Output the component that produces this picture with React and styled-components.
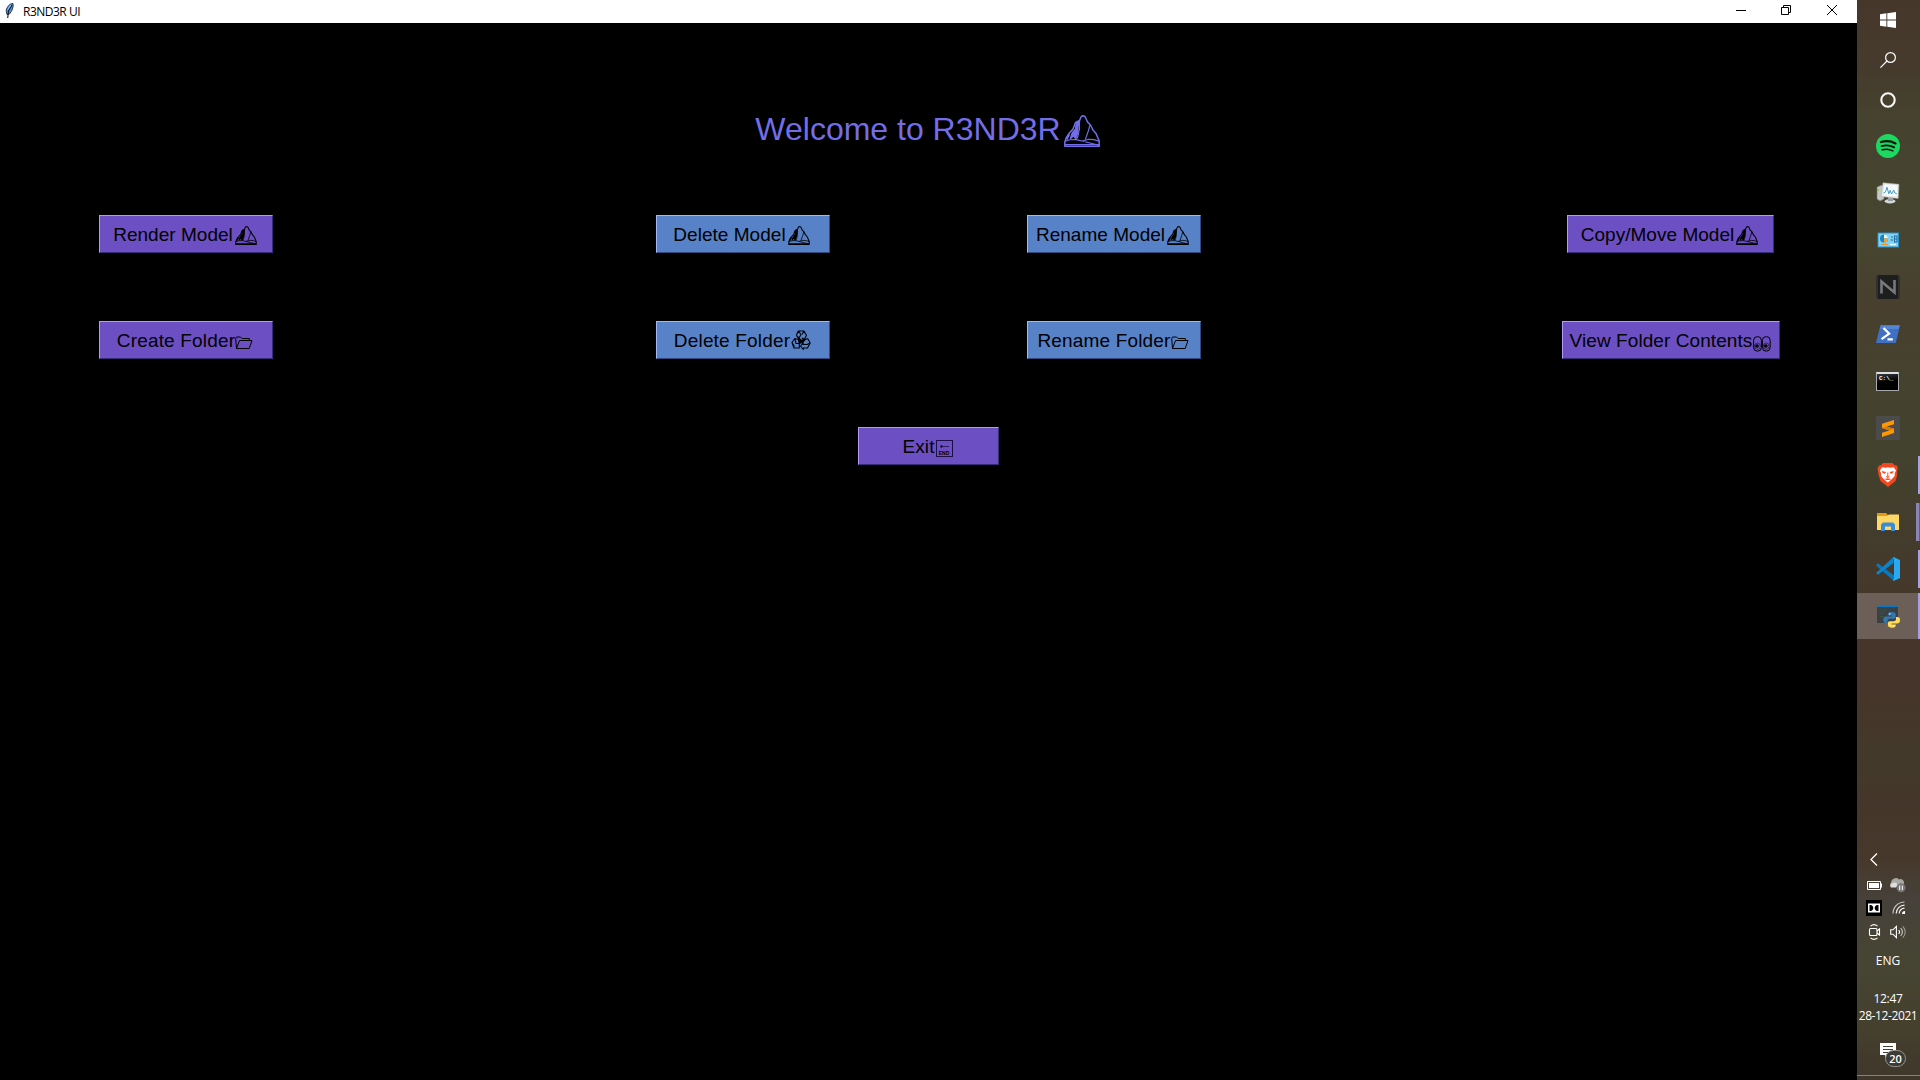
import React from "react";
import styled, { createGlobalStyle } from "styled-components";

const GlobalStyle = createGlobalStyle`
  html, body { margin: 0; padding: 0; background: #000; overflow: hidden; }
  * { box-sizing: border-box; }
  svg { display: block; flex: none; }
`;

const Desktop = styled.div`
  display: flex;
  width: 1920px;
  height: 1080px;
  background: #000;
`;

const Window = styled.main`
  flex: 1;
  display: flex;
  flex-direction: column;
  background: #000;
`;

const TitleBar = styled.header`
  display: flex;
  align-items: flex-start;
  height: 23px;
  padding: 3px 20px 0 5px;
  background: #fff;
  color: #000;
`;

const WindowTitle = styled.span`
  flex: 1;
  margin-left: 9px;
  font: 12px/17px "Open Sans", "Noto Sans", sans-serif;
  letter-spacing: -0.5px;
`;

const WindowControls = styled.div`
  display: grid;
  grid-template-columns: 45px 46px 10px;
  padding-top: 2px;
`;

const Heading = styled.h1`
  display: flex;
  justify-content: center;
  margin: 88px 0 0;
  height: 104px;
  padding-right: 2px;
  font: 400 32px/37px "Liberation Sans", Arial, sans-serif;
  color: #736ee8;
`;

const HeadingGlyph = styled.span`
  padding: 4px 0 0 3px;
`;

const ButtonRow = styled.div`
  display: flex;
  justify-content: space-between;
  height: 38px;
  margin-bottom: 68px;
`;

const MiddlePair = styled.div`
  display: flex;
`;

const Cell = styled.div`
  display: flex;
  justify-content: center;
  width: ${(p) => p.$width || 371}px;
`;

const tones = {
  violet: { face: "#6c4fc3", light: "#b09cf5", dark: "#3a2a78" },
  blue: { face: "#5782c8", light: "#a2b8f5", dark: "#2f4a7c" },
};

const TkButton = styled.button`
  display: flex;
  align-items: flex-start;
  justify-content: center;
  width: ${(p) => p.$width}px;
  height: 38px;
  padding: 8px 0 0;
  border: 1px solid;
  border-color: ${(p) => {
    const t = tones[p.$tone];
    return `${t.light} ${t.dark} ${t.dark} ${t.light}`;
  }};
  border-radius: 0;
  background: ${(p) => tones[p.$tone].face};
  color: #000;
  font: 19px/22px "Liberation Sans", Arial, sans-serif;
  letter-spacing: ${(p) => p.$tracking}px;
  white-space: nowrap;
`;

const GlyphBox = styled.span`
  width: ${(p) => p.$advance}px;
  padding: ${(p) => p.$top}px 0 0 ${(p) => p.$inset}px;
`;

const Taskbar = styled.aside`
  display: flex;
  flex-direction: column;
  width: 63px;
  height: 1080px;
  color: #fff;
  background: linear-gradient(
    180deg,
    #46372b 0,
    #453b2d 70px,
    #45432f 120px,
    #464530 240px,
    #483f2e 310px,
    #46422f 370px,
    #42422e 460px,
    #443a2c 560px,
    #46352a 650px,
    #46362a 700px,
    #42392a 760px,
    #45362a 810px,
    #46392c 860px,
    #46413a 900px,
    #464533 960px,
    #453f2e 1030px,
    #3f372b 1080px
  );
`;

const SystemSlot = styled.div`
  display: flex;
  align-items: center;
  justify-content: center;
  height: 40px;
  padding-right: 1px;
`;

const AppList = styled.div`
  display: flex;
  flex-direction: column;
  gap: 1px;
  margin-top: 3px;
`;

const AppSlot = styled.div`
  display: flex;
  align-items: center;
  height: 46px;
  padding-left: 19px;
  background: ${(p) => (p.$active ? "#6b5f57" : "transparent")};
`;

const Indicator = styled.i`
  width: ${(p) => (p.$stacked ? 4 : 2)}px;
  height: ${(p) => (p.$full ? 46 : 38)}px;
  margin-left: auto;
  background: #a5a0ea;
  border-left: ${(p) => (p.$stacked ? "3px solid #8a85b8" : "0")};
  box-shadow: ${(p) => (p.$stacked ? "inset 1px 0 #625c7a" : "none")};
`;

const Tray = styled.div`
  display: flex;
  flex-direction: column;
  margin-top: auto;
  height: 227px;
`;

const Chevron = styled.div`
  height: 17px;
  padding: 0 0 0 13px;
`;

const TrayRow = styled.div`
  display: flex;
  align-items: center;
  gap: ${(p) => p.$gap}px;
  height: ${(p) => p.$height}px;
  padding-left: ${(p) => p.$inset || 9}px;
`;

const TrayText = styled.div`
  font: 12px/17px "Open Sans", "Noto Sans", sans-serif;
  letter-spacing: ${(p) => p.$spacing || 0}px;
  text-align: center;
  white-space: nowrap;
  margin: ${(p) => p.$top || 0}px 1px 0 0;
`;

const Notifications = styled.div`
  position: relative;
  width: 27px;
  height: 25px;
  margin: 19px 0 0 23px;
`;

const Badge = styled.span`
  position: absolute;
  left: 5px;
  top: 7px;
  width: 21px;
  height: 17px;
  border: 1px solid #96928b;
  border-radius: 9px;
  background: #3b3b38;
  font: 600 11px/15px "Open Sans", "Noto Sans", sans-serif;
  text-align: center;
`;

const DesktopEdge = styled.div`
  height: 5px;
  margin-top: auto;
  border-top: 1px solid #85817b;
`;

const Mountain = ({ width, height, weight = 1.5 }) => (
  <svg width={width} height={height} viewBox="0 0 36 32" fill="none" stroke="currentColor" strokeWidth={weight} strokeLinejoin="round">
    <path d="M.8 31.2V27L2.2 23 5 18.5 9 14 11.5 7.5 15.5 5.5 17.3 1.5 19 .8 21 1.5 23.5 7 26.5 10 29 15 32 18.5 35.2 26V31.2Z" />
    <path d="M15.5 6 12.3 8.5 11.6 14 8.3 18 6.5 23.5 9.8 20.5 11.5 23.5 13.8 17.5 14 11Z" fill="currentColor" />
    <path d="M2.5 24.5 5.2 19.2" strokeWidth={weight * 1.4} />
    <path d="M15.5 6V14L14 21 12.5 24.5M26 10 24.3 16 21.3 24.5M1 26.3 6 24.8 12 24.6 18 26 25 24.2 30 24.6 35 26.3M1 29.6H35M18 26 26 28 35 30.4" strokeWidth={weight * 0.75} />
  </svg>
);

const Folder = () => (
  <svg width="18" height="14" viewBox="0 0 18 14" fill="none" stroke="currentColor">
    <path d="M1.5 12.5 .7 2.5 1.5 1H5.5L7 2.5H14.3V4.5M1.5 12.5 4.5 4.5H17L14.2 12.5Z" />
  </svg>
);

const Recycle = () => (
  <svg width="20" height="20" viewBox="0 0 20 20" fill="none" stroke="currentColor" strokeWidth="1.1" strokeLinejoin="round">
    <path d="M5.3 5.5 7.3 1H13L15.5 5.5 13.3 9.3 10.8 8M5.3 5.5 8 8 10 4.5 7.3 1M13 1 11 4.5" />
    <path d="M7.5 9.5 3.8 8.5 1 12.5 3 18H8.3V13.5H5L3.8 8.5M1 12.5 3.5 16.5" />
    <path d="M12.5 9.8 16.8 8.7 19.2 13 16.5 18H12.3V19.5L9.5 16 12.3 12.8V14.5H16L19.2 13" />
    <path d="m7 7.5 3 2.7 4.5-.9-3.3 3.2-2.9 1-.6-2.4Z" fill="currentColor" />
  </svg>
);

const Eyes = () => (
  <svg width="18" height="16" viewBox="0 0 18 16" fill="none" stroke="currentColor">
    <rect x=".6" y=".6" width="7.8" height="14.6" rx="3.8" />
    <rect x="9.4" y=".6" width="7.8" height="14.6" rx="3.8" />
    <ellipse cx="4.4" cy="10.2" rx="2.9" ry="3.2" strokeWidth=".5" />
    <ellipse cx="13.2" cy="10.2" rx="2.9" ry="3.2" strokeWidth=".5" />
    <circle cx="4" cy="10" r="1.8" fill="currentColor" stroke="none" />
    <circle cx="12.8" cy="10" r="1.8" fill="currentColor" stroke="none" />
  </svg>
);

const EndKeyBox = styled.span`
  display: flex;
  flex-direction: column;
  align-items: center;
  width: 17px;
  height: 17px;
  border: 1px solid #1d1048;
  padding-top: 3px;
`;

const EndKeyLabel = styled.span`
  margin-top: 1px;
  font: 700 5px/6px "Liberation Sans", Arial, sans-serif;
  letter-spacing: 0;
`;

const EndKey = () => (
  <EndKeyBox>
    <svg width="9" height="5" viewBox="0 0 9 5" stroke="#1d1048" fill="#1d1048">
      <path d="M0 2.5H9M0 2.5 2 1.2V3.8Z" strokeWidth=".8" />
    </svg>
    <EndKeyLabel>END</EndKeyLabel>
  </EndKeyBox>
);

const glyphs = {
  mountain: { advance: 26, top: 2, inset: 2, tracking: 0.03, node: <Mountain width={22} height={19} weight={1.8} /> },
  folder: { advance: 20, top: 6, inset: 0, tracking: 0.17, node: <Folder /> },
  recycle: { advance: 22, top: 0, inset: 1, tracking: 0.17, node: <Recycle /> },
  eyes: { advance: 20, top: 6, inset: 1, tracking: 0.08, node: <Eyes /> },
  end: { advance: 20, top: 4, inset: 1, tracking: 0.1, node: <EndKey /> },
};

const ActionButton = ({ label, glyph, tone = "violet", width = 174 }) => {
  const { advance, top, inset, tracking, node } = glyphs[glyph];
  return (
    <TkButton $tone={tone} $width={width} $tracking={tracking}>
      {label}
      <GlyphBox $advance={advance} $top={top} $inset={inset}>
        {node}
      </GlyphBox>
    </TkButton>
  );
};

const Feather = () => (
  <svg width="9" height="15" viewBox="0 0 9 15">
    <path d="M8 .5C5 .3 2 3.5 1.2 7.5L2 11.5 4.5 11C7 8 8.8 4 8 .5Z" fill="#5a94dc" stroke="#182b4a" strokeWidth=".9" />
    <path d="M7 2 3.5 8 2.7 15" fill="none" stroke="#10141c" strokeWidth="1.1" />
    <path d="M5.8 2 3 6.5" stroke="#b7d8f8" strokeWidth=".8" />
  </svg>
);

const WindowsLogo = () => (
  <svg width="16" height="16" viewBox="0 0 16 16" fill="#fff">
    <path d="M0 2.2 6.4 1.3V7.5H0ZM7.3 1.2 16 0V7.5H7.3ZM0 8.4H6.4V14.7L0 13.8ZM7.3 8.4H16V16L7.3 14.8Z" />
  </svg>
);
const SearchIcon = () => (
  <svg width="16" height="16" viewBox="0 0 16 16" fill="none" stroke="#fff" strokeWidth="1.2">
    <circle cx="10.5" cy="5.5" r="4.9" />
    <path d="M7 9 .4 15.6" />
  </svg>
);
const CortanaIcon = () => (
  <svg width="16" height="16" viewBox="0 0 16 16" fill="none">
    <circle cx="8" cy="8" r="6.7" stroke="#f7f7f5" strokeWidth="2.1" />
  </svg>
);
const SpotifyIcon = () => (
  <svg width="24" height="24" viewBox="0 0 24 24" fill="none" stroke="#05170c" strokeLinecap="round">
    <circle cx="12" cy="12" r="12" fill="#1ed760" stroke="none" />
    <path d="M5 8C10 6.6 15.5 7.1 19.5 9.4" strokeWidth="2.3" />
    <path d="M5.6 12.1C10 10.9 14.5 11.4 18.2 13.4" strokeWidth="1.9" />
    <path d="M6.2 15.8C10 14.8 13.8 15.2 16.9 16.9" strokeWidth="1.6" />
  </svg>
);
const MonitorIcon = () => (
  <svg width="24" height="22" viewBox="0 0 24 22">
    <path d="M1 5 6 3 8 5V17L4 19 1 17Z" fill="#c5c7c5" stroke="#777" strokeWidth=".6" />
    <path d="M2 7V9" stroke="#7cc520" strokeWidth="1.4" />
    <ellipse cx="14" cy="19.2" rx="5.5" ry="2.2" fill="#d5d8d9" />
    <path d="M12 15H17V19H12Z" fill="#999d9f" />
    <path d="M7 .7 23 2.3 22.2 16.5 5 14.5Z" fill="#e5e7e7" stroke="#aaa" strokeWidth=".5" />
    <path d="M8.4 2.2 21.3 3.6 20.7 14.6 7 13Z" fill="#f9fcfe" />
    <path d="M7.5 11 9.5 9.8 11 5.2 12.8 11.8 14.2 8.4 15.5 12 17.7 8 18.8 11 20.8 11.8" fill="none" stroke="#3f9bc8" strokeWidth="1" />
  </svg>
);
const ControlPanelIcon = () => (
  <svg width="24" height="16" viewBox="0 0 24 16">
    <rect x="2" y="1" width="20.5" height="14" fill="#7fd5f6" stroke="#2c8dc4" />
    <circle cx="8" cy="6.5" r="4" fill="#1c82c4" />
    <path d="M8 6.5V2.5A4 4 0 0 1 12 6.5Z" fill="#e7f7fc" />
    <path d="M8 6.5H12A4 4 0 0 1 8 10.5Z" fill="#f7a327" />
    <path d="M15 5H17M14.5 8H17M18.5 4H21V10H18.5ZM18.5 7H21" fill="none" stroke="#216f9e" strokeWidth="1.1" />
    <path d="M5 12.5H12" stroke="#f2932a" strokeWidth="1.4" />
    <path d="M14 12.5H20" stroke="#e9f8ff" strokeWidth="1.4" />
  </svg>
);
const NIcon = () => (
  <svg width="24" height="24" viewBox="0 0 24 24">
    <rect width="24" height="24" rx="2" fill="#303030" />
    <rect x="2" width="20" height="24" fill="#1e1e1f" />
    <path d="M5.5 18.5V6.5L18.5 17.5V5" fill="none" stroke="#77797b" strokeWidth="2.6" />
  </svg>
);
const PowerShellIcon = () => (
  <svg width="24" height="18" viewBox="0 0 24 18">
    <path d="M4.5 0H24L19.7 18H0Z" fill="#4070c4" />
    <path d="M5 .5H23.5L22.5 4H4Z" fill="#5484d4" />
    <path d="M7.5 3 13.2 8.7 5.5 14.2M11.5 14.3H16.8" fill="none" stroke="#fff" strokeWidth="2.2" />
  </svg>
);
const TerminalBox = styled.span`
  display: block;
  width: 23px;
  height: 19px;
  border: 1px solid #a8aaab;
  border-top: 2px solid #dce0e2;
  background: linear-gradient(170deg, #3a3a3a, #000 50%);
  color: #fff;
  font: 700 6px/9px "Liberation Mono", monospace;
  padding: 0 0 0 2px;
  white-space: pre;
  overflow: hidden;
`;
const SublimeIcon = () => (
  <svg width="24" height="24" viewBox="0 0 24 24">
    <rect width="24" height="24" rx="2" fill="#4b4b4b" />
    <path d="M18 4V8.3L10.7 10.5 18 12.8V17L6 21V16.8L13.3 14.4 6 12V7.8Z" fill="#ff9800" />
    <path d="M6 12 13.3 14.4 18 12.8 10.7 10.5Z" fill="#d97b00" />
  </svg>
);
const BraveIcon = () => (
  <svg width="24" height="24" viewBox="0 0 24 24">
    <path d="M7 0H16.5L18.6 2.3 20.5 2 22 5 21.3 7 21 13 19.5 18 12 24 4.5 18 2.6 12 1.8 7 1.4 5.5 3.3 2.3 5 2.3Z" fill="#f5471e" />
    <path d="M6 4.2 9.5 4.8 11.8 4.2 14.2 4.8 17.7 4.2 20 7.5 18.8 10 18.6 13 16 16 11.8 19.6 7.6 16 5.1 13 5 10 3.8 7.5Z" fill="#fff" />
    <path d="M5.8 8 10 9 9 10.7 6.7 10ZM17.8 8 13.6 9 14.6 10.7 16.9 10ZM9.5 13.3H14.1L11.8 15ZM8 16 11.8 15.3 15.6 16 11.8 17.2Z" fill="#f5471e" />
    <path d="M11.8 9.5V13" stroke="#f5471e" />
  </svg>
);
const ExplorerIcon = () => (
  <svg width="24" height="18" viewBox="0 0 24 18">
    <path d="M1 0H10L12 2H23V17H1Z" fill="#e39a17" />
    <path d="M1 3H11L13 1.5H23V17H1Z" fill="#ffd765" />
    <path d="M5 18V11.5L7 9.5H17L19 11.5V18H15V13.5H9V18Z" fill="#398cdb" />
  </svg>
);
const VSCodeIcon = () => (
  <svg width="24" height="24" viewBox="0 0 24 24">
    <path d="M0 8 2 6.3 18 18.4V24L1 9.5Z" fill="#0878bd" />
    <path d="M0 16 17.5 0V6L2 17.8 0 16Z" fill="#0c84cb" />
    <path d="M17.5 0 24 3V21L17.5 24 16.8 23 18 22V2L16.8 1Z" fill="#29a9f2" />
  </svg>
);
const PythonIcon = () => (
  <svg width="24" height="24" viewBox="0 0 24 24">
    <rect x="1" y="1" width="21" height="18" fill="#3a4145" />
    <rect x="1" y="1" width="21" height="2" fill="#0879c8" />
    <path d="M4 7H10M3 9.5H8M4 12.5H8" stroke="#31593a" strokeWidth="1.2" />
    <path d="M15.8 8C12 8 11.8 9.4 11.8 11.4H16V12.4H10C7.8 12.4 7.3 14 7.3 16S8.2 19 10 19H11.5V17C11.5 15.5 12.5 14.8 14 14.8H17.7C19.2 14.8 19.7 14 19.7 12.5V10.5C19.7 8.7 18 8 15.8 8Z" fill="#3678ad" />
    <path d="M15.8 23.7C19.6 23.7 19.8 22.2 19.8 20.4H15.6V19.4H21.5C23.7 19.4 24 17.8 24 15.8S23.2 12.9 21.4 12.9H20V15C20 16.5 19 17.2 17.5 17.2H13.8C12.3 17.2 11.9 18 11.9 19.4V21.3C11.9 23 13.6 23.7 15.8 23.7Z" fill="#ffdc57" />
    <circle cx="13.8" cy="10" r=".7" fill="#fff" />
    <circle cx="17.8" cy="21.6" r=".7" fill="#fff" />
  </svg>
);

const apps = [
  { id: "spotify", icon: <SpotifyIcon /> },
  { id: "monitor", icon: <MonitorIcon /> },
  { id: "control", icon: <ControlPanelIcon /> },
  { id: "n", icon: <NIcon /> },
  { id: "powershell", icon: <PowerShellIcon /> },
  { id: "terminal", icon: <TerminalBox>C:\_</TerminalBox> },
  { id: "sublime", icon: <SublimeIcon /> },
  { id: "brave", icon: <BraveIcon />, open: true },
  { id: "explorer", icon: <ExplorerIcon />, open: true, stacked: true },
  { id: "vscode", icon: <VSCodeIcon />, open: true },
  { id: "python", icon: <PythonIcon />, open: true, active: true },
];

const BatteryIcon = () => (
  <svg width="17" height="16" viewBox="0 0 17 16">
    <path d="M1.5 4.5H14.5V12.5H1.5Z" fill="none" stroke="#fff" />
    <path d="M3 6H13V11H3ZM15 6.5H16V10.5H15Z" fill="#fff" />
  </svg>
);
const CloudIcon = () => (
  <svg width="17" height="16" viewBox="0 0 17 16">
    <path d="M2.5 10A2.8 2.8 0 0 1 2 5.5 4.7 4.7 0 0 1 10 2.5 3.5 3.5 0 0 1 15 6L14 10Z" fill="#aaa9a5" />
    <path d="M2 10.5A2.5 2.5 0 0 1 3 6.5C5 4.7 7 5.3 8.5 7L7 10.5Z" fill="#dedddb" />
    <circle cx="12" cy="10.8" r="4.5" fill="#77777a" />
    <path d="M10.7 8.5V13.1M13.3 8.5V13.1" stroke="#fff" />
  </svg>
);
const DolbyIcon = () => (
  <svg width="16" height="16" viewBox="0 0 16 16">
    <rect width="16" height="16" fill="#000" />
    <path d="M2 3.5H14V12.5H2Z" fill="#fff" />
    <path d="M3.5 5H4.5C8.2 5 8.2 11 4.5 11H3.5ZM12.5 5H11.5C7.8 5 7.8 11 11.5 11H12.5Z" fill="#000" />
  </svg>
);
const WifiIcon = () => (
  <svg width="14" height="14" viewBox="0 0 14 14" fill="none" stroke="#f2f0ec" strokeWidth="1.2">
    <path d="M1 12.5A11.5 11.5 0 0 1 12.5 1" opacity=".75" />
    <path d="M4.2 12.5A8.3 8.3 0 0 1 12.5 4.2M7.2 12.5A5.3 5.3 0 0 1 12.5 7.2" />
    <path d="M10 13A3 3 0 0 1 13 10V13Z" fill="#fff" stroke="none" />
  </svg>
);
const CameraIcon = () => (
  <svg width="14" height="16" viewBox="0 0 14 16" fill="none" stroke="#fff" strokeWidth="1.1">
    <rect x="1.5" y="4.5" width="7.5" height="7" rx="1" />
    <path d="M9 7 11.5 5V11L9 9M2.5 2.2C4.5.4 7.5.4 9.5 2.2M2.5 13.8C4.5 15.6 7.5 15.6 9.5 13.8" />
  </svg>
);
const SpeakerIcon = () => (
  <svg width="17" height="14" viewBox="0 0 17 14" fill="none" stroke="#fff" strokeWidth="1.1">
    <path d="M.7 4.8H3L6.4 1.4V12.6L3 9.2H.7ZM8.7 5C9.8 6.2 9.8 7.8 8.7 9" />
    <path d="M10.7 3.2C12.8 5.5 12.8 8.5 10.7 10.8" opacity=".7" />
    <path d="M12.8 1.3C16 4.6 16 9.4 12.8 12.7" opacity=".45" />
  </svg>
);

export default function App() {
  return (
    <>
      <GlobalStyle />
      <Desktop>
        <Window>
          <TitleBar>
            <Feather />
            <WindowTitle>R3ND3R UI</WindowTitle>
            <WindowControls>
              <svg width="10" height="10" viewBox="0 0 10 10"><path d="M0 5.5H10" stroke="#000" /></svg>
              <svg width="10" height="10" viewBox="0 0 10 10" fill="none" stroke="#000"><path d="M.5 2.5H7.5V9.5H.5ZM2.5 2.5V.5H9.5V7.5H7.5" /></svg>
              <svg width="10" height="10" viewBox="0 0 10 10" stroke="#000"><path d="M0 0 10 10M10 0 0 10" /></svg>
            </WindowControls>
          </TitleBar>
          <Heading>
            Welcome to R3ND3R
            <HeadingGlyph><Mountain width={36} height={32} weight={1.5} /></HeadingGlyph>
          </Heading>
          <ButtonRow>
            <Cell $width={372}><ActionButton label="Render Model" glyph="mountain" /></Cell>
            <MiddlePair>
              <Cell><ActionButton label="Delete Model" glyph="mountain" tone="blue" /></Cell>
              <Cell><ActionButton label="Rename Model" glyph="mountain" tone="blue" /></Cell>
            </MiddlePair>
            <Cell $width={373}><ActionButton label="Copy/Move Model" glyph="mountain" width={207} /></Cell>
          </ButtonRow>
          <ButtonRow>
            <Cell $width={372}><ActionButton label="Create Folder" glyph="folder" /></Cell>
            <MiddlePair>
              <Cell><ActionButton label="Delete Folder" glyph="recycle" tone="blue" /></Cell>
              <Cell><ActionButton label="Rename Folder" glyph="folder" tone="blue" /></Cell>
            </MiddlePair>
            <Cell $width={372}><ActionButton label="View Folder Contents" glyph="eyes" width={218} /></Cell>
          </ButtonRow>
          <Cell $width={1857}><ActionButton label="Exit" glyph="end" width={141} /></Cell>
        </Window>
        <Taskbar>
          <SystemSlot><WindowsLogo /></SystemSlot>
          <SystemSlot><SearchIcon /></SystemSlot>
          <SystemSlot><CortanaIcon /></SystemSlot>
          <AppList>
            {apps.map((app) => (
              <AppSlot key={app.id} $active={app.active}>
                {app.icon}
                {app.open && <Indicator $stacked={app.stacked} $full={app.active} />}
              </AppSlot>
            ))}
          </AppList>
          <Tray>
            <Chevron>
              <svg width="8" height="13" viewBox="0 0 8 13" fill="none" stroke="#fff" strokeWidth="1.3"><path d="M7 .5 1 6.5 7 12.5" /></svg>
            </Chevron>
            <TrayRow $height={30} $gap={6}><BatteryIcon /><CloudIcon /></TrayRow>
            <TrayRow $height={16} $gap={10}><DolbyIcon /><WifiIcon /></TrayRow>
            <TrayRow $height={32} $gap={8} $inset={11}><CameraIcon /><SpeakerIcon /></TrayRow>
            <TrayText $top={4}>ENG</TrayText>
            <TrayText $top={21} $spacing={-0.3}>12:47</TrayText>
            <TrayText $spacing={-0.4}>28-12-2021</TrayText>
            <Notifications>
              <svg width="16" height="16" viewBox="0 0 16 16"><path d="M0 0H16V12H8L5 15V12H0Z" fill="#fff" /><path d="M3 3.5H13M3 6.5H13M3 9.5H10" stroke="#45402f" /></svg>
              <Badge>20</Badge>
            </Notifications>
            <DesktopEdge />
          </Tray>
        </Taskbar>
      </Desktop>
    </>
  );
}
